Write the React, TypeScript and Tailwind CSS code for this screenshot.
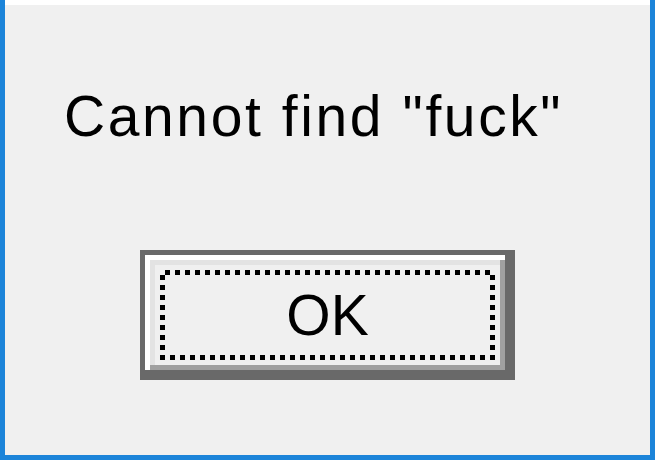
import React from 'react';

// checkerboard focus rectangle, like the classic Windows DrawFocusRect
function FocusRect() {
  return (
    <svg className="absolute inset-0" width="335" height="90" viewBox="0 0 335 90">
      <defs>
        <pattern id="focusDots" width="10" height="10" patternUnits="userSpaceOnUse">
          <rect x="5" y="0" width="5" height="5" fill="#000" />
          <rect x="0" y="5" width="5" height="5" fill="#000" />
        </pattern>
      </defs>
      <path d="M0 0H335V90H0Z M5 5V85H330V5Z" fill="url(#focusDots)" fillRule="evenodd" />
    </svg>
  );
}

function OkButton() {
  return (
    <div className="ml-[135px] mt-[105px] w-[375px] h-[130px] border-[5px] border-[#696969]">
      <div className="w-full h-full p-[15px] bg-[#f0f0f0] shadow-[inset_-5px_-5px_#696969,inset_5px_5px_#ffffff,inset_-10px_-10px_#a0a0a0,inset_10px_10px_#e3e3e3]">
        <div className="relative w-[335px] h-[90px] flex items-center justify-center">
          <FocusRect />
          <span className="text-[57px] leading-[57px] text-black font-['Liberation_Sans',Arial,sans-serif]">OK</span>
        </div>
      </div>
    </div>
  );
}

export default function App() {
  return (
    <div className="w-[655px] h-[460px] bg-[#1c84d9] px-[5px] pb-[5px]">
      <div className="h-full flex flex-col bg-[#f0f0f0] border-t-[5px] border-white">
        <p className="ml-[59px] mt-[83px] text-[57px] leading-[57px] tracking-[2.6px] text-black whitespace-nowrap font-['Liberation_Sans',Arial,sans-serif]">
          Cannot find "fuck"
        </p>
        <OkButton />
      </div>
    </div>
  );
}
